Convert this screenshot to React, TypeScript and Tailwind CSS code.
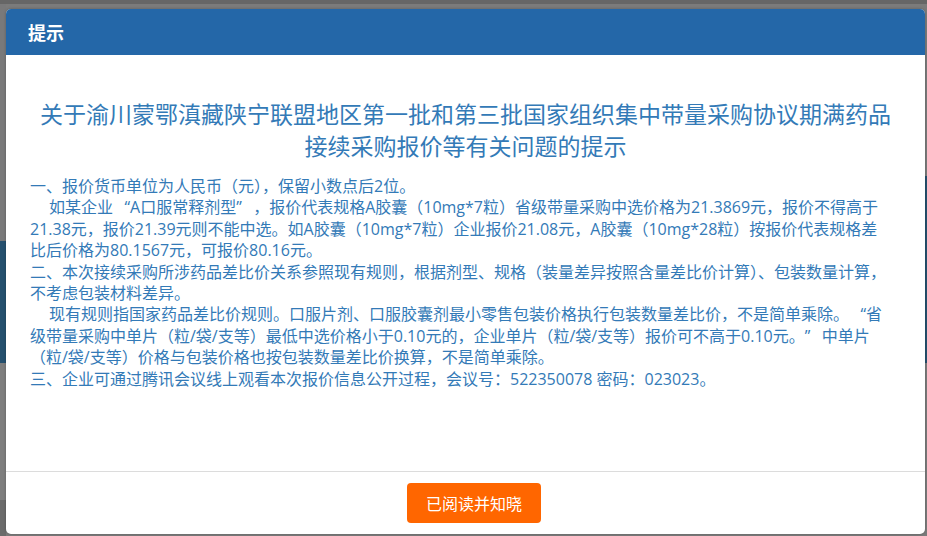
const lines: { text: string; indent?: boolean }[] = [
  { text: '一、报价货币单位为人民币（元），保留小数点后2位。' },
  {
    text: '如某企业“A口服常释剂型”，报价代表规格A胶囊（10mg*7粒）省级带量采购中选价格为21.3869元，报价不得高于',
    indent: true,
  },
  { text: '21.38元，报价21.39元则不能中选。如A胶囊（10mg*7粒）企业报价21.08元，A胶囊（10mg*28粒）按报价代表规格差' },
  { text: '比后价格为80.1567元，可报价80.16元。' },
  { text: '二、本次接续采购所涉药品差比价关系参照现有规则，根据剂型、规格（装量差异按照含量差比价计算）、包装数量计算，' },
  { text: '不考虑包装材料差异。' },
  {
    text: '现有规则指国家药品差比价规则。口服片剂、口服胶囊剂最小零售包装价格执行包装数量差比价，不是简单乘除。“省',
    indent: true,
  },
  { text: '级带量采购中单片（粒/袋/支等）最低中选价格小于0.10元的，企业单片（粒/袋/支等）报价可不高于0.10元。”中单片' },
  { text: '（粒/袋/支等）价格与包装价格也按包装数量差比价换算，不是简单乘除。' },
  { text: '三、企业可通过腾讯会议线上观看本次报价信息公开过程，会议号：522350078 密码：023023。' },
];

// curly quotes take a full-width cell, hugging the text they enclose
function Line({ text }: { text: string }) {
  const parts = text.split(/([“”])/);
  return (
    <>
      {parts.map((p, i) =>
        p === '“' ? (
          <span key={i} className="inline-block w-[17px] text-right">
            {p}
          </span>
        ) : p === '”' ? (
          <span key={i} className="inline-block w-[17px] text-left">
            {p}
          </span>
        ) : (
          <span key={i}>{p}</span>
        )
      )}
    </>
  );
}

export default function App() {
  return (
    <div className="relative w-[927px] h-[536px] overflow-hidden bg-[#7b7b7b] font-['Noto_Sans_CJK_SC','Noto_Sans',sans-serif]">
      {/* dimmed page behind the dialog */}
      <div className="flex h-full">
        <div className="w-[6px] flex flex-col">
          <div className="h-[4px] bg-[#666]" />
          <div className="h-[237px] bg-[#79797a]" />
          <div className="h-[122px] bg-[#25506e]" />
          <div className="h-[137px] bg-[#7e7e7e]" />
          <div className="flex-1 bg-[#6b6b6b]" />
        </div>
        <div className="flex-1 flex flex-col">
          <div className="h-[4px] bg-[#666]" />
          <div className="flex-1" />
        </div>
        <div className="w-[2px] flex flex-col">
          <div className="h-[4px] bg-[#666]" />
          <div className="h-[172px] bg-[#7b7b7b]" />
          <div className="h-[187px] bg-[#25506e]" />
          <div className="flex-1 bg-[#7b7b7b]" />
        </div>
      </div>

      {/* dialog */}
      <div className="absolute left-[6px] top-[9px] w-[919px] h-[525px] bg-white rounded-[5px] overflow-hidden flex flex-col shadow-[0_0_3px_rgba(0,0,0,0.25)]">
        <div className="h-[46px] shrink-0 bg-[#2467a8] flex items-center px-[22px]">
          <span className="text-white text-[18px] font-bold leading-none">提示</span>
        </div>

        <div className="flex-1 pt-[42px] px-[24px] text-[#337ab7]">
          <h1 className="text-center text-[23px] leading-[32px] font-normal">
            关于渝川蒙鄂滇藏陕宁联盟地区第一批和第三批国家组织集中带量采购协议期满药品
            <br />
            接续采购报价等有关问题的提示
          </h1>
          <div className="mt-[15px] text-[16px] leading-[21.4px] font-['Open_Sans','Noto_Sans_CJK_SC',sans-serif]">
            {lines.map((l, i) => (
              <div key={i} className={l.indent ? 'whitespace-nowrap pl-[19px]' : 'whitespace-nowrap'}>
                <Line text={l.text} />
              </div>
            ))}
          </div>
        </div>

        <div className="h-[63px] shrink-0 border-t border-[#dcdcdc] flex items-center justify-center pl-[17px]">
          <button className="w-[134px] h-[40px] rounded-[4px] bg-[#ff6600] text-white text-[16px]">
            已阅读并知晓
          </button>
        </div>
      </div>
    </div>
  );
}
